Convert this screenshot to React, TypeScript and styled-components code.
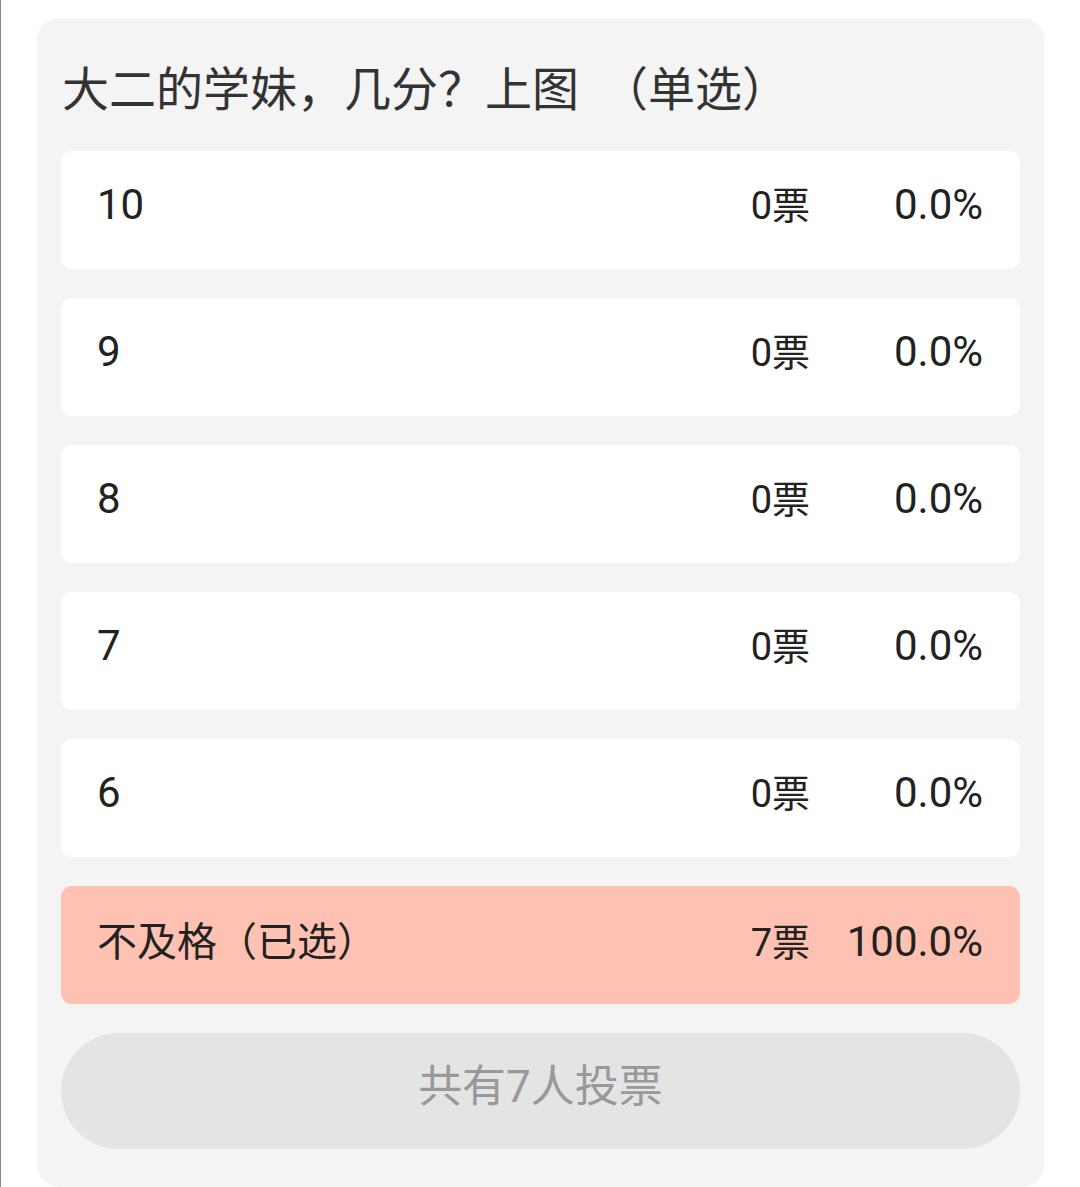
import React from "react";
import styled, { createGlobalStyle } from "styled-components";

const GlobalStyle = createGlobalStyle`
  html, body {
    margin: 0;
    padding: 0;
    background: #ffffff;
  }
  body {
    font-family: Roboto, "Noto Sans CJK SC", "Noto Sans", sans-serif;
    border-left: 1px solid #8a8a8a;
    min-height: 1187px;
    box-sizing: border-box;
  }
`;

const Page = styled.div`
  padding: 18px 36px 0 36px;
`;

const Card = styled.div`
  background: #f4f4f4;
  border-radius: 22px;
  padding: 34px 24px 38px 24px;
  display: flex;
  flex-direction: column;
`;

const Title = styled.h2`
  margin: 0 0 23px 1px;
  font-size: 47px;
  font-weight: 400;
  line-height: 76px;
  color: #333333;
`;

const TitleTag = styled.span`
  margin-left: 22px;
`;

const Options = styled.div`
  display: flex;
  flex-direction: column;
  gap: 29px;
`;

const Option = styled.div<{ $selected?: boolean }>`
  height: 118px;
  box-sizing: border-box;
  display: flex;
  align-items: baseline;
  padding: 24px 37px 0 36px;
  border-radius: 11px;
  background: ${(p) => (p.$selected ? "#ffc1b1" : "#ffffff")};
  color: #222222;
  font-size: 42px;
`;

const Label = styled.span<{ $cjk?: boolean }>`
  flex: 1;
  font-size: ${(p) => (p.$cjk ? "40px" : "42px")};
`;

const Votes = styled.span`
  text-align: right;
  font-size: 38px;
`;

const Percent = styled.span`
  width: 173px;
  text-align: right;
`;

const Total = styled.div`
  margin-top: 29px;
  height: 116px;
  border-radius: 58px;
  background: #e4e4e4;
  color: #999999;
  font-size: 44px;
  display: flex;
  align-items: center;
  justify-content: center;
  padding-bottom: 16px;
  box-sizing: border-box;
`;

const options = [
  { label: "10", votes: 0, pct: "0.0%" },
  { label: "9", votes: 0, pct: "0.0%" },
  { label: "8", votes: 0, pct: "0.0%" },
  { label: "7", votes: 0, pct: "0.0%" },
  { label: "6", votes: 0, pct: "0.0%" },
  { label: "不及格（已选）", votes: 7, pct: "100.0%", selected: true },
];

const App: React.FC = () => {
  return (
    <>
      <GlobalStyle />
      <Page>
        <Card>
          <Title>
            大二的学妹，几分？上图<TitleTag>（单选）</TitleTag>
          </Title>
          <Options>
            {options.map((o) => (
              <Option key={o.label} $selected={o.selected}>
                <Label $cjk={o.selected}>{o.label}</Label>
                <Votes>{o.votes}票</Votes>
                <Percent>{o.pct}</Percent>
              </Option>
            ))}
          </Options>
          <Total>共有7人投票</Total>
        </Card>
      </Page>
    </>
  );
};

export default App;
